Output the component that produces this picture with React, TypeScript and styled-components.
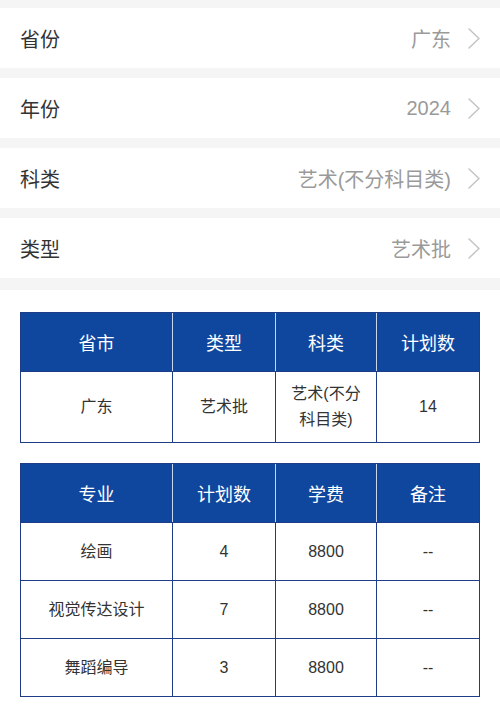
import React from "react";
import styled, { createGlobalStyle } from "styled-components";

const GlobalStyle = createGlobalStyle`
  html, body { margin: 0; padding: 0; background: #ffffff; }
  body { font-family: "Liberation Sans", "Noto Sans CJK SC", sans-serif; }
  * { box-sizing: border-box; }
`;

const Page = styled.div`
  width: 500px;
  min-height: 707px;
  background: #ffffff;
`;

const FilterList = styled.div`
  display: flex;
  flex-direction: column;
  gap: 10px;
  background: #f5f5f5;
  padding: 8px 0 12px;
`;

const FilterRow = styled.div`
  height: 60px;
  background: #ffffff;
  display: flex;
  align-items: center;
  padding: 0 20px 0 20px;
`;

const Label = styled.span`
  font-size: 20px;
  color: #333333;
  flex: 1;
`;

const Value = styled.span`
  font-size: 20px;
  color: #9a9a9a;
  margin-right: 17px;
`;

const Chevron = styled.svg`
  width: 12px;
  height: 21px;
  display: block;
`;

const Tables = styled.div`
  display: flex;
  flex-direction: column;
  gap: 20px;
  padding: 22px 20px 10px;
`;

const Table = styled.div`
  width: 460px;
  display: flex;
  flex-direction: column;
  border: 1px solid #1f3d86;
`;

const HeadRow = styled.div`
  display: grid;
  grid-template-columns: 152px 103px 101px 1fr;
  background: #0f479f;
  height: 58px;
`;

const HeadCell = styled.div`
  display: flex;
  align-items: center;
  justify-content: center;
  color: #ffffff;
  font-size: 18px;
  &:not(:last-child) { border-right: 1px solid #c9d5ea; }
`;

const BodyRow = styled.div<{ $h?: number }>`
  display: grid;
  grid-template-columns: 152px 103px 101px 1fr;
  border-top: 1px solid #1f3d86;
  min-height: ${(p) => p.$h ?? 58}px;
`;

const BodyCell = styled.div`
  display: flex;
  align-items: center;
  justify-content: center;
  text-align: center;
  color: #333333;
  font-size: 16px;
  line-height: 26px;
  padding: 9px 10px;
  &:not(:last-child) { border-right: 1px solid #1f3d86; }
`;

const ChevronIcon = () => (
  <Chevron viewBox="0 0 12 21" fill="none">
    <polyline points="1,1 11,10.5 1,20" stroke="#c4c4c4" strokeWidth="1.5" strokeLinecap="round" strokeLinejoin="round" />
  </Chevron>
);

const filters = [
  { label: "省份", value: "广东" },
  { label: "年份", value: "2024" },
  { label: "科类", value: "艺术(不分科目类)" },
  { label: "类型", value: "艺术批" },
];

const majors = [
  ["绘画", "4", "8800", "--"],
  ["视觉传达设计", "7", "8800", "--"],
  ["舞蹈编导", "3", "8800", "--"],
];

export default function App() {
  return (
    <Page>
      <GlobalStyle />
      <FilterList>
        {filters.map((f) => (
          <FilterRow key={f.label}>
            <Label>{f.label}</Label>
            <Value>{f.value}</Value>
            <ChevronIcon />
          </FilterRow>
        ))}
      </FilterList>
      <Tables>
        <Table>
          <HeadRow>
            <HeadCell>省市</HeadCell>
            <HeadCell>类型</HeadCell>
            <HeadCell>科类</HeadCell>
            <HeadCell>计划数</HeadCell>
          </HeadRow>
          <BodyRow $h={70}>
            <BodyCell>广东</BodyCell>
            <BodyCell>艺术批</BodyCell>
            <BodyCell>艺术(不分科目类)</BodyCell>
            <BodyCell>14</BodyCell>
          </BodyRow>
        </Table>
        <Table>
          <HeadRow>
            <HeadCell>专业</HeadCell>
            <HeadCell>计划数</HeadCell>
            <HeadCell>学费</HeadCell>
            <HeadCell>备注</HeadCell>
          </HeadRow>
          {majors.map((m) => (
            <BodyRow key={m[0]}>
              {m.map((c, i) => (
                <BodyCell key={i}>{c}</BodyCell>
              ))}
            </BodyRow>
          ))}
        </Table>
      </Tables>
    </Page>
  );
}
